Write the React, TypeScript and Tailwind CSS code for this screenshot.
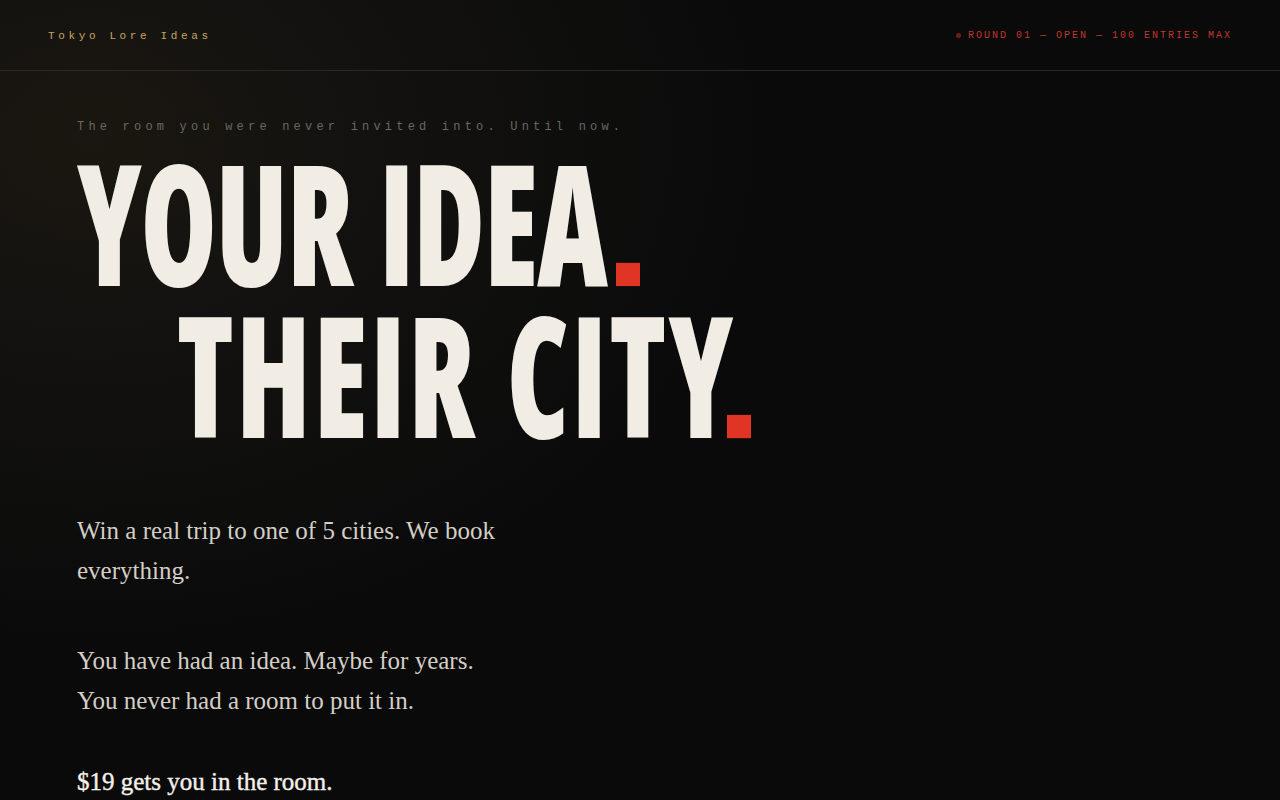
import React from "react";

export default function App() {
  return (
    <div className="min-h-screen w-full bg-[#0a0a0a] bg-[radial-gradient(ellipse_700px_520px_at_90px_140px,#1a1710_0%,#121110_45%,#0a0a0a_100%)] text-[#f1ece4]">
      <header className="flex h-[71px] items-center justify-between border-b border-[#2a2825] px-12 pt-[1px] font-['Liberation_Mono',monospace]">
        <div className="pt-[1px] text-[11px] tracking-[0.33em] text-[#c8a462]">Tokyo Lore Ideas</div>
        <div className="flex items-center gap-[7px] text-[10px] tracking-[0.2em] text-[#c0392b]">
          <span className="inline-block h-[5px] w-[5px] rounded-full bg-[#6e1e1a]" />
          <span>ROUND 01 — OPEN — 100 ENTRIES MAX</span>
        </div>
      </header>

      <main className="px-[77px] pt-[48px]">
        <p className="font-['Liberation_Mono',monospace] text-[12px] leading-[16px] tracking-[0.35em] text-[#6a6763]">
          The room you were never invited into. Until now.
        </p>

        <div className="mt-[10px] h-[304px]">
          <h1 className="origin-top-left scale-y-[1.37] font-['Open_Sans',sans-serif] text-[123px] font-extrabold leading-[111px] text-[#f1ece4] [font-stretch:75%]">
            <span className="block tracking-[-0.01em] [word-spacing:6px]">
              YOUR IDEA
              <span className="ml-[9px] inline-block h-[17.5px] w-[24px] overflow-hidden bg-[#e03424] align-baseline text-transparent">.</span>
            </span>
            <span className="block pl-[100px] tracking-[0.02em] [word-spacing:5px]">
              THEIR CITY
              <span className="ml-[-9px] inline-block h-[17.5px] w-[24px] overflow-hidden bg-[#e03424] align-baseline text-transparent">.</span>
            </span>
          </h1>
        </div>

        <div className="mt-[62px] max-w-[480px] font-['Liberation_Serif',serif] text-[25px] leading-[40px] text-[#d3cec6]">
          <p>Win a real trip to one of 5 cities. We book everything.</p>
          <p className="mt-[50px]">
            You have had an idea. Maybe for years.
            <br />
            You never had a room to put it in.
          </p>
          <p className="mt-[41px] text-[#f3efe9] [-webkit-text-stroke:0.4px_#f3efe9]">$19 gets you in the room.</p>
        </div>
      </main>
    </div>
  );
}
